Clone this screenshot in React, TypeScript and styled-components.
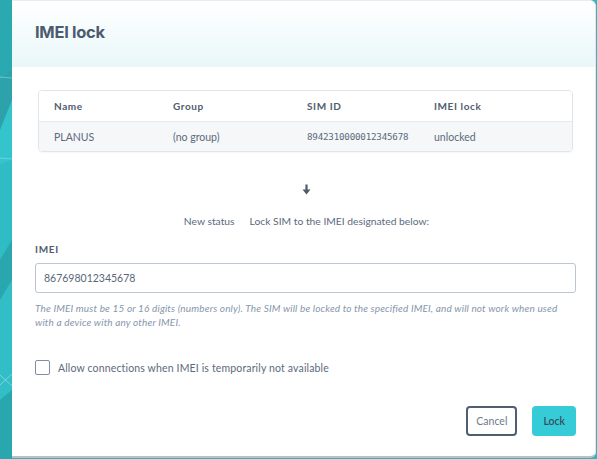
import React from "react";
import styled, { createGlobalStyle } from "styled-components";

const Global = createGlobalStyle`
  html, body { margin: 0; padding: 0; background: #ffffff; }
  body { font-family: "Lato", "Open Sans", sans-serif; }
  * { box-sizing: border-box; }
`;

const Page = styled.div`
  display: flex;
  width: 597px;
  height: 459px;
  background: #2fb6be;
  overflow: hidden;
`;

const Backdrop = styled.svg`
  flex: 0 0 12px;
  width: 12px;
  height: 459px;
  display: block;
`;

const Modal = styled.div`
  flex: 0 0 584px;
  height: 458px;
  background: #ffffff;
  border-radius: 0 6px 6px 0;
  border-top: 1px solid #e9edf0;
  border-bottom: 2px solid #b9c0c7;
  border-right: 1px solid #e3e7eb;
  display: flex;
  flex-direction: column;
  overflow: hidden;
`;

const Header = styled.div`
  height: 66px;
  padding: 21px 0 0 23px;
  background: linear-gradient(180deg, #ffffff 0%, #f6fcfd 40%, #e9f7f9 100%);
`;

const Title = styled.h1`
  margin: 0;
  font-family: "Inter", "Open Sans", sans-serif;
  font-weight: 700;
  font-size: 16.5px;
  letter-spacing: -0.3px;
  color: #4d5b6e;
`;

const Body = styled.div`
  flex: 1;
  padding: 23px 19px 0 23px;
  display: flex;
  flex-direction: column;
`;

const Table = styled.div`
  margin: 0 3px;
  border: 1px solid #e1e5e9;
  border-radius: 4px;
  overflow: hidden;
  box-shadow: 0 1px 2px rgba(0, 0, 0, 0.04);
`;

const Row = styled.div<{ $head?: boolean }>`
  display: grid;
  grid-template-columns: 119px 134px 127px 1fr;
  height: 30px;
  align-items: center;
  padding-left: 15px;
  background: ${(p) => (p.$head ? "#ffffff" : "#f5f7f9")};
  border-top: ${(p) => (p.$head ? "none" : "1px solid #e6eaee")};
`;

const HeadCell = styled.div`
  font-size: 10px;
  font-weight: 700;
  letter-spacing: 0.6px;
  color: #4f5c6e;
`;

const Cell = styled.div<{ $mono?: boolean }>`
  font-size: ${(p) => (p.$mono ? "9.2px" : "10.5px")};
  font-family: ${(p) =>
    p.$mono ? '"DejaVu Sans Mono", "Liberation Mono", monospace' : "inherit"};
  color: #5c6a7c;
  letter-spacing: ${(p) => (p.$mono ? "-0.2px" : "0")};
`;

const ArrowWrap = styled.div`
  display: flex;
  justify-content: center;
  margin-top: 32px;
  height: 12px;
  padding-left: 2px;
`;

const Status = styled.div`
  display: flex;
  justify-content: center;
  gap: 15px;
  margin-top: 19px;
  font-size: 10.3px;
  color: #5c6a7c;
  padding-left: 2px;
`;

const Label = styled.div`
  margin-top: 16px;
  font-size: 10px;
  font-weight: 700;
  letter-spacing: 0.7px;
  color: #4f5c6e;
`;

const Input = styled.input`
  margin-top: 8px;
  width: 100%;
  height: 30px;
  border: 1px solid #bcc6d1;
  border-radius: 3px;
  padding: 0 8px;
  font-family: inherit;
  font-size: 10.5px;
  color: #596779;
  outline: none;
`;

const Hint = styled.p`
  margin: 8px 0 0 0;
  font-size: 10px;
  font-style: italic;
  line-height: 14px;
  color: #8696ab;
  letter-spacing: 0.15px;
`;

const CheckRow = styled.label`
  display: flex;
  align-items: center;
  gap: 8px;
  margin-top: 31px;
  font-size: 10.5px;
  letter-spacing: 0.15px;
  color: #5c6a7c;
`;

const Box = styled.span`
  width: 15px;
  height: 15px;
  border: 1.5px solid #7f8ea2;
  border-radius: 2px;
  background: #ffffff;
`;

const Footer = styled.div`
  display: flex;
  justify-content: flex-end;
  gap: 15px;
  margin-top: 31px;
`;

const Button = styled.button<{ $primary?: boolean }>`
  height: 30px;
  padding: 0 ${(p) => (p.$primary ? "11px" : "8px")};
  border-radius: 4px;
  font-family: inherit;
  font-size: 10.5px;
  cursor: pointer;
  border: ${(p) => (p.$primary ? "none" : "2px solid #4e5e73")};
  background: ${(p) => (p.$primary ? "#35ccd7" : "#ffffff")};
  color: ${(p) => (p.$primary ? "#394d5c" : "#6d7a8b")};
  font-weight: ${(p) => (p.$primary ? 600 : 400)};
`;

export default function App() {
  return (
    <>
      <Global />
      <Page>
        <Backdrop viewBox="0 0 12 459" preserveAspectRatio="none">
          <rect x="0" y="0" width="12" height="459" fill="#2eb2ba" />
          <polygon points="0,0 12,0 12,70 0,80" fill="#2aa9b1" />
          <polygon points="0,80 12,70 12,120 0,130" fill="#2ea2aa" />
          <polygon points="0,130 12,100 12,160 0,165" fill="#33c4cc" />
          <polygon points="0,165 12,160 12,240 0,260" fill="#30bcc4" />
          <polygon points="0,260 12,240 12,280 0,300" fill="#2aa6ae" />
          <polygon points="0,300 12,280 12,390 0,400" fill="#31bec6" />
          <polygon points="0,400 12,390 12,459 0,459" fill="#29a7ae" />
          <line x1="0" y1="77" x2="12" y2="78" stroke="#8fdde2" strokeWidth="0.6" />
          <line x1="0" y1="158" x2="12" y2="159" stroke="#8fdde2" strokeWidth="0.6" />
          <line x1="0" y1="375" x2="12" y2="386" stroke="#a9e6ea" strokeWidth="0.6" />
          <line x1="0" y1="385" x2="12" y2="374" stroke="#a9e6ea" strokeWidth="0.6" />
        </Backdrop>
        <Modal>
          <Header>
            <Title>IMEI lock</Title>
          </Header>
          <Body>
            <Table>
              <Row $head>
                <HeadCell>Name</HeadCell>
                <HeadCell>Group</HeadCell>
                <HeadCell>SIM ID</HeadCell>
                <HeadCell>IMEI lock</HeadCell>
              </Row>
              <Row>
                <Cell>PLANUS</Cell>
                <Cell>(no group)</Cell>
                <Cell $mono>8942310000012345678</Cell>
                <Cell>unlocked</Cell>
              </Row>
            </Table>
            <ArrowWrap>
              <svg width="9" height="11" viewBox="0 0 9 11">
                <path d="M4.5 0.5 V7.5" stroke="#4f5c6e" strokeWidth="2.2" />
                <path d="M0.5 5.5 L4.5 10.5 L8.5 5.5 Z" fill="#4f5c6e" />
              </svg>
            </ArrowWrap>
            <Status>
              <span>New status</span>
              <span>Lock SIM to the IMEI designated below:</span>
            </Status>
            <Label>IMEI</Label>
            <Input defaultValue="867698012345678" />
            <Hint>
              The IMEI must be 15 or 16 digits (numbers only). The SIM will be locked to the
              specified IMEI, and will not work when used
              <br />
              with a device with any other IMEI.
            </Hint>
            <CheckRow>
              <Box />
              Allow connections when IMEI is temporarily not available
            </CheckRow>
            <Footer>
              <Button>Cancel</Button>
              <Button $primary>Lock</Button>
            </Footer>
          </Body>
        </Modal>
      </Page>
    </>
  );
}
